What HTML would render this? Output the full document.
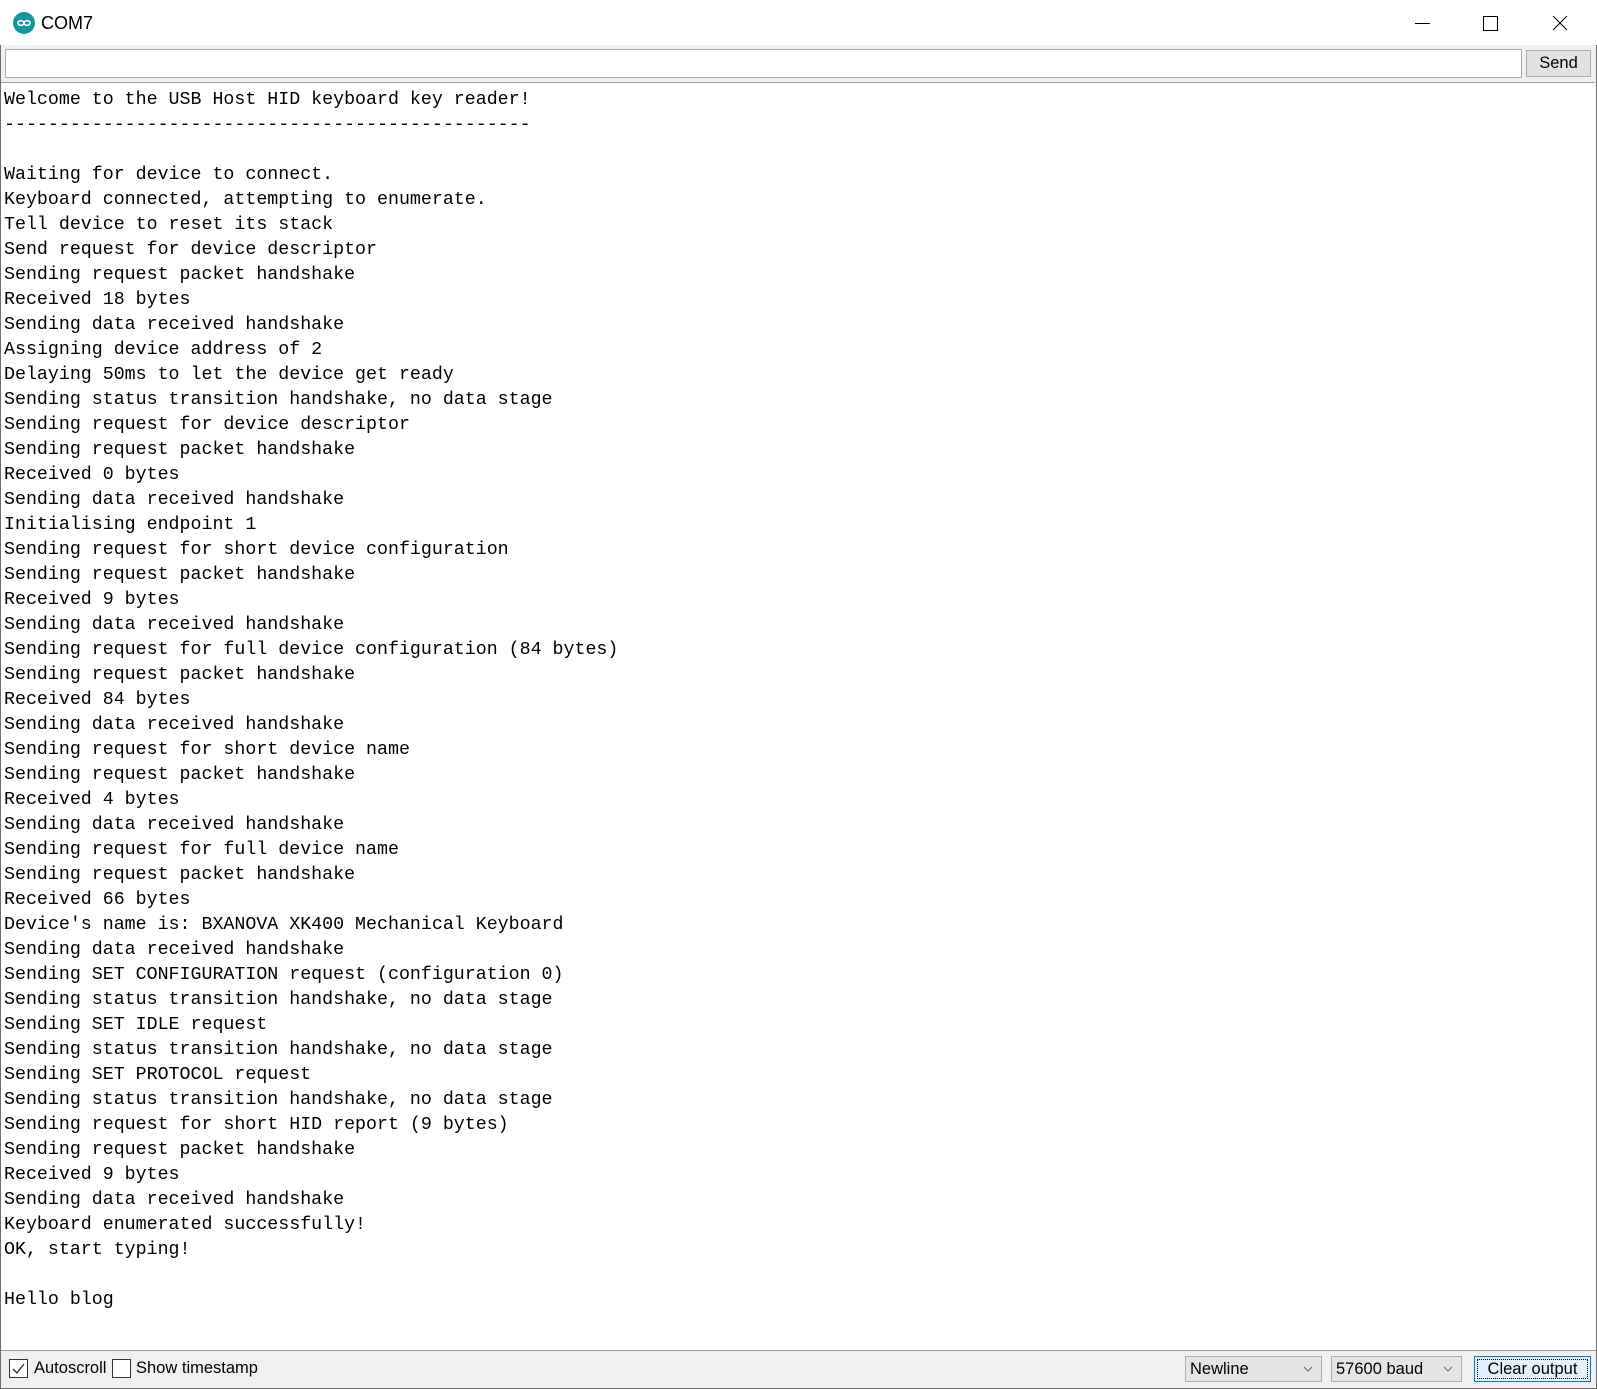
<!DOCTYPE html>
<html><head><meta charset="utf-8"><style>
*{margin:0;padding:0;box-sizing:border-box}
body{width:1597px;height:1389px;overflow:hidden;background:#fff;font-family:"Liberation Sans",sans-serif;position:relative}
.win{position:absolute;left:0;top:0;width:1597px;height:1389px;border:1px solid #6d6d6d;border-top:1px solid #9a9a9a}
.title{position:absolute;left:0;top:0;width:1597px;height:45px;background:#fff}
.icon{position:absolute;left:13px;top:12px;width:22px;height:22px;border-radius:50%;background:#14979c}
.ttl{position:absolute;left:41px;top:13px;font-size:18px;color:#000}
.inrow{position:absolute;left:1px;top:45px;width:1595px;height:38px;background:#f0f0f0}
.inp{position:absolute;left:5px;top:49px;width:1517px;height:29px;border:1px solid #acacac;background:#fff}
.send{position:absolute;left:1526px;top:50px;width:65px;height:27px;border:1px solid #adadad;background:#e1e1e1;font-size:16.5px;text-align:center;line-height:25px}
.out{position:absolute;left:1px;top:82px;width:1594px;height:1268px;border-top:1px solid #a0a0a0;background:#fff}
pre{position:absolute;left:4px;top:88px;font-family:"Liberation Mono",monospace;font-size:18.3px;line-height:25px;color:#000}
.bot{position:absolute;left:1px;top:1350px;width:1595px;height:38px;background:#f0f0f0;border-top:1px solid #a0a0a0}
.cb{position:absolute;top:1359px;width:19px;height:19px;border:1px solid #333;background:#fff}
.lbl{position:absolute;top:1359px;font-size:16.5px;color:#000}
.dd{position:absolute;top:1356px;height:26px;border:1px solid #adadad;background:#e5e5e5;font-size:16.5px;padding-left:4px;line-height:24px}
.dd svg{position:absolute;right:8px;top:9px}
.clr{position:absolute;left:1474px;top:1356px;width:117px;height:26px;border:1px solid #0078d7;background:#e5f1fb;font-size:16.5px;text-align:center;line-height:24px}
.clr i{position:absolute;left:2px;top:2px;right:2px;bottom:2px;border:1px dotted #000}
</style></head><body>
<div class="win"></div>
<div class="title">
<div class="icon"><svg width="22" height="22" viewBox="0 0 22 22"><ellipse cx="8" cy="11" rx="3" ry="2.3" fill="none" stroke="#fff" stroke-width="1.6"/><ellipse cx="14" cy="11" rx="3" ry="2.3" fill="none" stroke="#fff" stroke-width="1.6"/></svg></div>
<div class="ttl">COM7</div>
<svg style="position:absolute;left:1410px;top:14px" width="180" height="20">
<line x1="5" y1="9.5" x2="20" y2="9.5" stroke="#000" stroke-width="1"/>
<rect x="73.5" y="2.5" width="14" height="14" fill="none" stroke="#000"/>
<line x1="143" y1="2" x2="157" y2="16" stroke="#000"/><line x1="157" y1="2" x2="143" y2="16" stroke="#000"/>
</svg>
</div>
<div class="inrow"></div>
<div class="inp"></div>
<div class="send">Send</div>
<div class="out"></div>
<pre>Welcome to the USB Host HID keyboard key reader!
------------------------------------------------

Waiting for device to connect.
Keyboard connected, attempting to enumerate.
Tell device to reset its stack
Send request for device descriptor
Sending request packet handshake
Received 18 bytes
Sending data received handshake
Assigning device address of 2
Delaying 50ms to let the device get ready
Sending status transition handshake, no data stage
Sending request for device descriptor
Sending request packet handshake
Received 0 bytes
Sending data received handshake
Initialising endpoint 1
Sending request for short device configuration
Sending request packet handshake
Received 9 bytes
Sending data received handshake
Sending request for full device configuration (84 bytes)
Sending request packet handshake
Received 84 bytes
Sending data received handshake
Sending request for short device name
Sending request packet handshake
Received 4 bytes
Sending data received handshake
Sending request for full device name
Sending request packet handshake
Received 66 bytes
Device's name is: BXANOVA XK400 Mechanical Keyboard
Sending data received handshake
Sending SET CONFIGURATION request (configuration 0)
Sending status transition handshake, no data stage
Sending SET IDLE request
Sending status transition handshake, no data stage
Sending SET PROTOCOL request
Sending status transition handshake, no data stage
Sending request for short HID report (9 bytes)
Sending request packet handshake
Received 9 bytes
Sending data received handshake
Keyboard enumerated successfully!
OK, start typing!

Hello blog</pre>
<div class="bot"></div>
<div class="cb" style="left:9px"><svg width="17" height="17"><path d="M3 9 L7 13 L14 4" fill="none" stroke="#333" stroke-width="1.4"/></svg></div>
<div class="lbl" style="left:34px">Autoscroll</div>
<div class="cb" style="left:112px"></div>
<div class="lbl" style="left:136px">Show timestamp</div>
<div class="dd" style="left:1185px;width:137px">Newline<svg width="10" height="6"><path d="M1 1 L5 5 L9 1" fill="none" stroke="#666"/></svg></div>
<div class="dd" style="left:1331px;width:131px">57600 baud<svg width="10" height="6"><path d="M1 1 L5 5 L9 1" fill="none" stroke="#666"/></svg></div>
<div class="clr"><i></i>Clear output</div>
</body></html>
